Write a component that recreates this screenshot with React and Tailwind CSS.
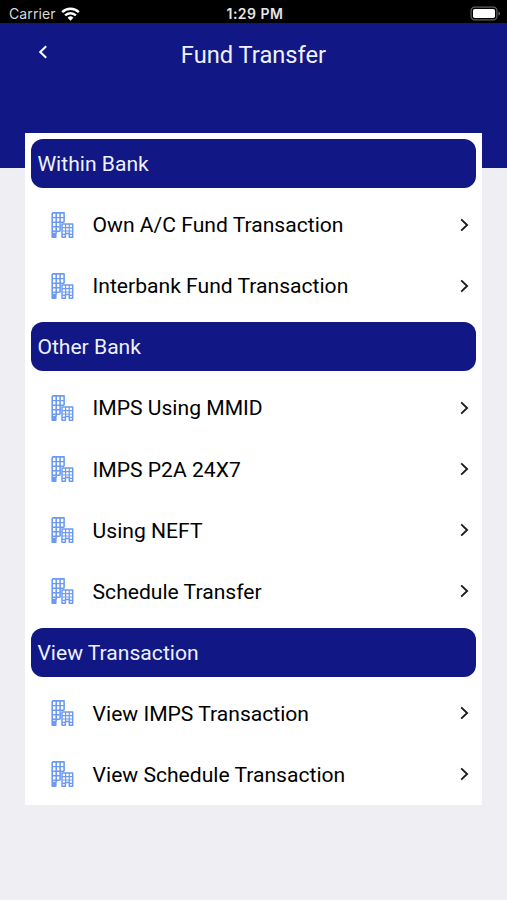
import React from 'react';

const sections = [
  { title: 'Within Bank', items: ['Own A/C Fund Transaction', 'Interbank Fund Transaction'] },
  { title: 'Other Bank', items: ['IMPS Using MMID', 'IMPS P2A 24X7', 'Using NEFT', 'Schedule Transfer'] },
  { title: 'View Transaction', items: ['View IMPS Transaction', 'View Schedule Transaction'] },
];

function WifiIcon() {
  return (
    <svg className="ml-[5.5px] h-[14px] w-[19px]" viewBox="0 0 19 14" fill="none" stroke="white" strokeWidth="2.4">
      <path d="M1.2 5.2a11.8 11.8 0 0 1 16.6 0" />
      <path d="M4.1 8.4a7.7 7.7 0 0 1 10.8 0" />
      <path d="M9.5 13.7 6.6 10.8a4.1 4.1 0 0 1 5.8 0z" fill="white" stroke="none" />
    </svg>
  );
}

function BatteryIcon() {
  return (
    <svg className="h-[15px] w-[31px]" viewBox="0 0 31 15" fill="none">
      <rect x="1.1" y="1.1" width="25.8" height="12.8" rx="3.6" stroke="#626262" strokeWidth="1.2" />
      <rect x="3" y="3" width="22" height="9" rx="1.8" fill="white" />
      <path d="M28.4 5.4c2.2.8 2.2 3.4 0 4.2z" fill="#626262" />
    </svg>
  );
}

function BuildingIcon() {
  return (
    <svg className="h-[28px] w-[24px]" viewBox="0 0 24 28" fill="none" stroke="#6c9af3">
      {/* Tower */}
      <path d="M2.2 1.9h11.9v9.4M2.2 1.9v24.3h3.6v-3.6H2.2M6.2 22.6v-20M10.1 1.9v18.4" strokeWidth="1.6" strokeLinejoin="round" />
      <path d="M2.2 6.6h11.9M2.2 11.2h11.9M2.2 15.8h8M2.2 20.3h8" strokeWidth="1.4" />
      <path d="M2.2 22.9h3.6v3.2H2.2z" fill="#6c9af3" stroke="none" />
      {/* Front block */}
      <path d="M12 13.1h10.7v13.2h-3.4v-3.7h-3.9v3.7H12z" strokeWidth="1.5" strokeLinejoin="round" />
      <path d="M15.6 13.1v9.5M19.2 13.1v9.5M12 16.6h10.7M12 20h10.7M12 23.4h3.4M19.3 23.4h3.4" strokeWidth="1.2" />
    </svg>
  );
}

function MenuRow({ label }) {
  return (
    <button className="flex h-[61.1px] w-full items-center pl-[25px] pr-[13px] text-left">
      <BuildingIcon />
      <span className="ml-[18.2px] flex-1 whitespace-nowrap pt-[1px] text-[21.1px] leading-[26px] text-black">{label}</span>
      <svg className="h-[14px] w-[9px]" viewBox="0 0 9 14" fill="none" stroke="#1c1c1c" strokeWidth="1.9">
        <path d="M1.2 1.4 7.1 7l-5.9 5.6" />
      </svg>
    </button>
  );
}

export default function App() {
  return (
    <div className="h-[900px] w-full overflow-hidden bg-[#efeef3] font-['Roboto',sans-serif]">
      {/* Status bar */}
      <div className="grid h-[23px] grid-cols-3 items-center bg-black pl-[9px] pr-[6px] pt-[4px] font-['Inter',sans-serif] text-white">
        <div className="flex items-center">
          <span className="text-[14px] leading-[17px] tracking-[0.1px] text-[#d8d8d8]">Carrier</span>
          <WifiIcon />
        </div>
        <span className="text-center text-[14px] font-semibold leading-[17px] tracking-[0.5px] text-[#e6e6e6]">1:29 PM</span>
        <div className="flex justify-end">
          <BatteryIcon />
        </div>
      </div>

      {/* Header */}
      <header className="h-[145px] bg-[#111785]">
        <div className="grid h-[62px] grid-cols-[60px_1fr_60px] items-center">
          <button className="flex justify-end pb-[4px] pr-[12px]">
            <svg className="h-[14px] w-[10px]" viewBox="0 0 10 14" fill="none" stroke="white" strokeWidth="2">
              <path d="M8.2 1.2 2.2 7l6 5.8" />
            </svg>
          </button>
          <h1 className="pt-[2px] text-center text-[23.7px] leading-[28px] text-[#eef1ff]">Fund Transfer</h1>
        </div>
      </header>

      <main className="relative -mt-[35px] ml-[25.4px] h-[672px] w-[457px] bg-white">
        {sections.map((section) => (
          <section key={section.title}>
            <div className="h-[61.1px] px-[6px] pt-[6px]">
              <h2 className="flex h-[49px] items-center rounded-[12px] bg-[#111785] pl-[6px] pt-[1px] text-[21.1px] leading-[26px] text-[#eef1ff]">
                {section.title}
              </h2>
            </div>
            {section.items.map((item) => (
              <MenuRow key={item} label={item} />
            ))}
          </section>
        ))}
      </main>
    </div>
  );
}
